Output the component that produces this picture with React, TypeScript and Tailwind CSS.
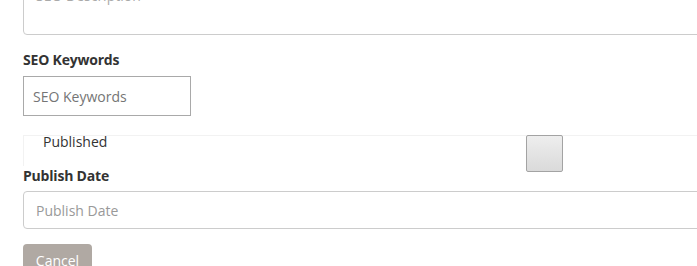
export default function App() {
  return (
    <div className="h-[266px] w-[697px] overflow-hidden bg-white" style={{ fontFamily: '"Open Sans", "Noto Sans", sans-serif' }}>
      <div className="-mt-[21px] w-[760px] pl-[23px]">
        {/* SEO description */}
        <textarea
          placeholder="SEO Description"
          className="block h-[56px] w-full resize-none rounded border border-[#cccccc] px-3 pt-[6px] text-[14px] leading-5 placeholder:text-[#aaaaaa] focus:outline-none"
        />

        {/* SEO keywords */}
        <label className="mt-[15px] block text-[14px] font-bold leading-5 tracking-[-0.2px] text-[#333333]">SEO Keywords</label>
        <input
          type="text"
          placeholder="SEO Keywords"
          className="mt-[6px] block h-[40px] w-[168px] border border-[#a9a9a9] pl-[9px] text-[14px] placeholder:text-[#757575] focus:outline-none"
        />

        {/* published */}
        <div className="mt-[19px] flex h-[31px] items-start border-l border-t border-[#f2f2f2]">
          <span className="w-[502px] pl-[19px] text-[14px] leading-[12px] text-[#333333]">Published</span>
          <input
            type="checkbox"
            className="-mt-px h-[37px] w-[37px] shrink-0 appearance-none rounded-[2px] border border-[#a3a3a3] bg-gradient-to-b from-[#eeeeee] to-[#dadada]"
          />
        </div>

        {/* publish date */}
        <label className="block text-[14px] font-bold leading-5 tracking-[-0.2px] text-[#333333]">Publish Date</label>
        <input
          type="text"
          placeholder="Publish Date"
          className="mt-[5px] block h-[38px] w-full rounded border border-[#cccccc] px-3 text-[14px] placeholder:text-[#999999] focus:outline-none"
        />

        <button className="mt-[15px] block h-[34px] w-[69px] rounded bg-[#b0a9a3] text-[14px] leading-5 text-white">
          Cancel
        </button>
      </div>
    </div>
  );
}
